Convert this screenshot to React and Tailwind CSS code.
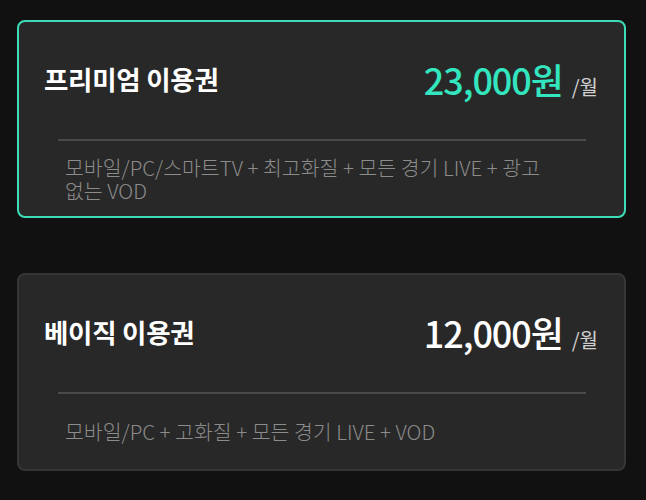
const plans = [
  {
    name: "프리미엄 이용권",
    price: "23,000원",
    desc: "모바일/PC/스마트TV + 최고화질 + 모든 경기 LIVE + 광고 없는 VOD",
    active: true,
  },
  {
    name: "베이직 이용권",
    price: "12,000원",
    desc: "모바일/PC + 고화질 + 모든 경기 LIVE + VOD",
    active: false,
  },
];

function PlanCard({ plan }) {
  return (
    <div
      className={`flex h-[198px] w-[609px] flex-col rounded-lg border-2 bg-[#282828] ${
        plan.active ? "border-[#3cdcb6]" : "border-[#363636]"
      }`}
    >
      <div className="flex h-[117px] items-center justify-between pb-[4px] pl-[25px] pr-[26px]">
        <p className="text-[26.5px] font-bold tracking-[-0.01em] text-white">{plan.name}</p>
        <p className="flex items-baseline">
          <span
            className={`text-[36px] font-medium tracking-[-0.03em] ${
              plan.active ? "text-[#33e6bf]" : "text-white"
            }`}
          >
            {plan.price}
          </span>
          <span className="ml-[9px] text-[20px] text-[#d0d0d0]">/월</span>
        </p>
      </div>
      <div className="ml-[39px] mr-[38px] h-[2px] bg-[#4a4a4a]" />
      <div className="flex flex-1 items-center pl-[46px] pr-[50px]">
        <p className="break-keep text-[20.5px] font-light leading-[23px] text-[#8c8c8c]">
          {plan.desc}
        </p>
      </div>
    </div>
  );
}

export default function App() {
  return (
    <div
      className="flex min-h-[500px] flex-col gap-[55px] bg-[#111111] pl-[17px] pt-[20px]"
      style={{ fontFamily: '"Noto Sans CJK KR", "Noto Sans", sans-serif' }}
    >
      {plans.map((p) => (
        <PlanCard key={p.name} plan={p} />
      ))}
    </div>
  );
}
